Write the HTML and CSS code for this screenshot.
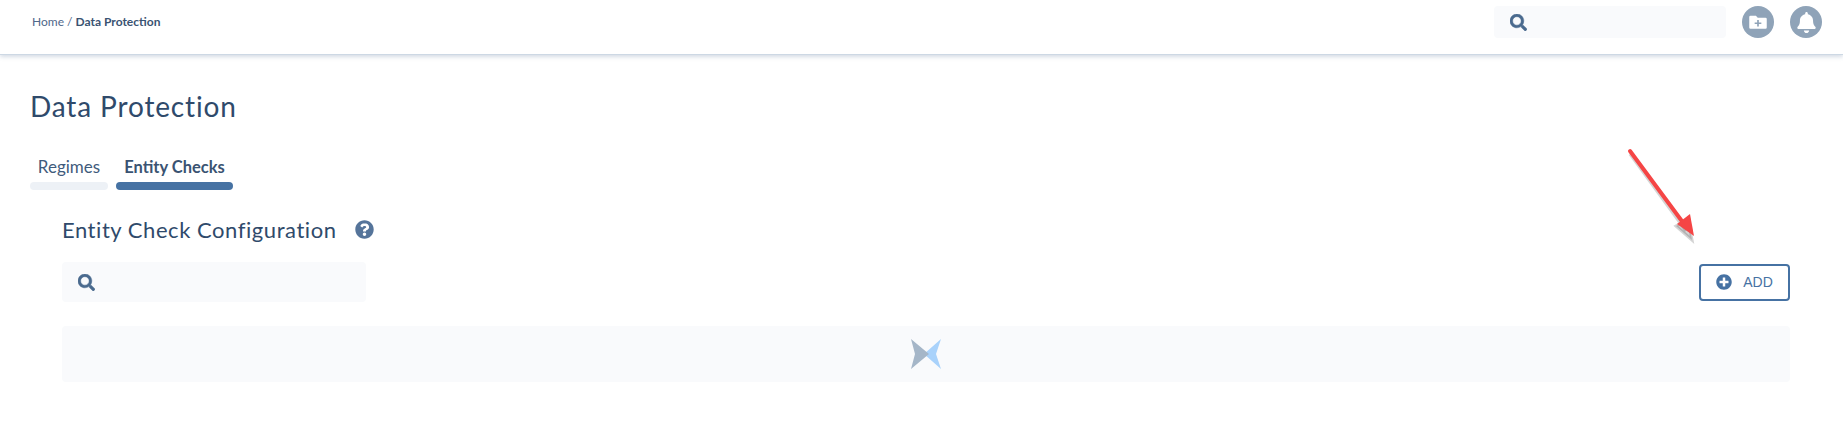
FILE: index.html
```html
<!DOCTYPE html>
<html lang='en'>
	<head>
		<meta charset='utf-8' />
		<title>Data Protection</title>
		<link rel="stylesheet" href="styles.css">
	</head>
	<body>
		<header class="topBar">
			<div class="breadcrumb">Home / <b>Data Protection</b></div>
			<div class="topActions">
				<div class="searchBox topSearch">
					<svg class="searchIcon" viewBox="0 0 512 512"><path d="M505 442.700L405.300 343c-4.500-4.500-10.600-7-17-7H372c27.600-35.300 44-79.700 44-128C416 93.100 322.900 0 208 0S0 93.100 0 208s93.100 208 208 208c48.300 0 92.700-16.400 128-44v16.300c0 6.400 2.500 12.500 7 17l99.700 99.700c9.400 9.400 24.600 9.400 33.900 0l28.300-28.300c9.400-9.400 9.400-24.600.1-34zM208 336c-70.700 0-128-57.200-128-128 0-70.700 57.200-128 128-128 70.700 0 128 57.200 128 128 0 70.700-57.200 128-128 128z"/></svg>
				</div>
				<div class="roundIcon">
					<svg viewBox="0 0 24 24" width="20" height="20"><path fill="#fff" d="M3 4.500h6.500l2.200 2.300H21a1.500 1.500 0 0 1 1.500 1.500v10.200A1.500 1.500 0 0 1 21 20H3a1.500 1.500 0 0 1-1.500-1.500V6A1.500 1.500 0 0 1 3 4.500z"/><path fill="#8fa3b8" d="M11 9.500h2v3h3v2h-3v3h-2v-3H8v-2h3z"/></svg>
				</div>
				<div class="roundIcon">
					<svg viewBox="0 0 448 512" width="19" height="21"><path fill="#fff" d="M224 512c35.300 0 64-28.700 64-64H160c0 35.300 28.700 64 64 64zm215.400-149.700c-19.300-20.800-55.500-52-55.500-154.300 0-77.700-54.500-139.900-127.900-155.200V32c0-17.700-14.300-32-32-32s-32 14.300-32 32v20.800C118.600 68.100 64.100 130.300 64.100 208c0 102.300-36.200 133.500-55.500 154.300-6 6.400-8.700 14.100-8.600 21.700.1 16.400 13 32 32.100 32h383.800c19.100 0 32-15.600 32.100-32 .1-7.600-2.600-15.300-8.600-21.700z"/></svg>
				</div>
			</div>
		</header>
		<main class="page">
			<h1 class="pageTitle">Data Protection</h1>
			<div class="tabs">
				<div class="tab tabRegimes">Regimes</div>
				<div class="tab tabActive">Entity Checks</div>
			</div>
			<section class="config">
				<div class="configHead">
					<h2 class="configTitle">Entity Check Configuration</h2>
					<svg class="helpIcon" viewBox="0 0 512 512"><path d="M504 256c0 137-111 248-248 248S8 393 8 256 119 8 256 8s248 111 248 248zM262.700 90c-54.500 0-89.300 23-116.500 63.800-3.500 5.300-2.400 12.400 2.700 16.300l34.700 26.300c5.200 3.900 12.600 3 16.700-2.100 17.900-22.700 30.100-35.800 57.300-35.800 20.400 0 45.700 13.100 45.700 33 0 15-12.400 22.700-32.600 34-23.600 13.200-54.800 29.700-54.800 70.900V300c0 6.600 5.400 12 12 12h56c6.600 0 12-5.400 12-12v-1.300c0-28.600 83.500-29.800 83.500-107.200 0-58.300-60.500-102.500-117.200-102.500zM256 339.200c-25.500 0-46.200 20.700-46.200 46.200 0 25.500 20.700 46.200 46.200 46.200s46.200-20.700 46.200-46.200c0-25.500-20.700-46.200-46.200-46.200z"/></svg>
				</div>
				<div class="toolRow">
					<div class="searchBox listSearch">
						<svg class="searchIcon" viewBox="0 0 512 512"><path d="M505 442.700L405.300 343c-4.500-4.500-10.600-7-17-7H372c27.600-35.300 44-79.700 44-128C416 93.100 322.900 0 208 0S0 93.100 0 208s93.100 208 208 208c48.300 0 92.700-16.400 128-44v16.300c0 6.400 2.500 12.500 7 17l99.700 99.700c9.400 9.400 24.600 9.400 33.900 0l28.300-28.300c9.400-9.400 9.400-24.600.1-34zM208 336c-70.700 0-128-57.200-128-128 0-70.700 57.200-128 128-128 70.700 0 128 57.200 128 128 0 70.700-57.200 128-128 128z"/></svg>
					</div>
					<button class="addButton">
						<svg viewBox="0 0 512 512" width="16" height="16"><path d="M256 8C119 8 8 119 8 256s111 248 248 248 248-111 248-248S393 8 256 8zm144 276c0 6.600-5.400 12-12 12h-92v92c0 6.600-5.400 12-12 12h-56c-6.600 0-12-5.400-12-12v-92h-92c-6.600 0-12-5.400-12-12v-56c0-6.600 5.400-12 12-12h92v-92c0-6.600 5.400-12 12-12h56c6.600 0 12 5.400 12 12v92h92c6.600 0 12 5.400 12 12z"/></svg>
						ADD
					</button>
				</div>
				<div class="loadingPanel">
					<svg viewBox="0 0 32 30" width="32" height="30"><path fill="#a9d2fb" d="M31 0 L26 15 L31 30 L14 15z"/><path fill="#a5b6c8" d="M1 0 L19 15 L1 30 L5 15z"/></svg>
				</div>
			</section>
		</main>
		<svg class="arrow" viewBox="0 0 80 100" width="80" height="100">
			<path class="arrowShadow" d="M4 7 L60 84 M50 79 L66 93 L62 72z"/>
			<path class="arrowLine" d="M4 4 L61 81"/>
			<path class="arrowHead" d="M51 77 L68 89 L64 67z"/>
		</svg>
	</body>
</html>
```

FILE: styles.css
```css
* {
	box-sizing: border-box;
}
body {
	margin: 0px;
	background: #fff;
	color: #2f4a6b;
	font-family: "Lato", "Open Sans", sans-serif;
}
.topBar {
	height: 55px;
	padding: 6px 21px 0px 32px;
	display: flex;
	justify-content: space-between;
	align-items: flex-start;
	border-bottom: 1px solid #cdd8e4;
	box-shadow: 0px 2px 4px rgba(90, 120, 155, 0.25);
}
.breadcrumb {
	margin-top: 8px;
	font-size: 12px;
	line-height: 15px;
	color: #50688a;
}
.breadcrumb b {
	color: #3a5372;
}
.topActions {
	display: flex;
	gap: 16px;
}
.searchBox {
	display: flex;
	align-items: center;
	background: #f9fafc;
	border-radius: 4px;
	padding-left: 16px;
}
.searchIcon {
	width: 17px;
	height: 17px;
	fill: #4a6a8e;
	stroke: #4a6a8e;
	stroke-width: 14px;
}
.topSearch {
	width: 232px;
	height: 32px;
}
.roundIcon {
	width: 32px;
	height: 32px;
	border-radius: 50%;
	background: #8fa3b8;
	display: flex;
	justify-content: center;
	align-items: center;
}
.page {
	padding: 36px 53px 0px 30px;
}
.pageTitle {
	margin: 0px;
	font-size: 28px;
	line-height: 30px;
	font-weight: 400;
	color: #2f4a6b;
	letter-spacing: 0.85px;
}
.tabs {
	margin-top: 32px;
	display: flex;
	gap: 8px;
}
.tab {
	height: 37px;
	padding-top: 4px;
	font-size: 17px;
	line-height: 20px;
	text-align: center;
	display: flex;
	flex-direction: column;
	justify-content: space-between;
	align-items: center;
}
.tab::after {
	content: "";
	width: 100%;
	height: 8px;
	border-radius: 4px;
	background: #edf1f6;
}
.tabRegimes {
	width: 78px;
	color: #3f5b7c;
}
.tabActive {
	width: 117px;
	font-weight: 700;
	font-size: 16.500px;
	color: #3a5372;
}
.tabActive::after {
	background: #4672a3;
}
.config {
	margin-left: 32px;
}
.configHead {
	margin-top: 24px;
	height: 30px;
	display: flex;
	align-items: center;
	gap: 18px;
}
.configTitle {
	margin: 0px;
	font-size: 22px;
	font-weight: 400;
	letter-spacing: 0.55px;
	color: #2f4a6b;
}
.helpIcon {
	width: 19px;
	height: 19px;
	fill: #55749a;
}
.toolRow {
	margin-top: 18px;
	display: flex;
	justify-content: space-between;
	align-items: center;
}
.listSearch {
	width: 304px;
	height: 40px;
}
.addButton {
	width: 91px;
	height: 37px;
	display: flex;
	justify-content: center;
	align-items: center;
	gap: 11px;
	background: #fff;
	border: 2px solid #4672a3;
	border-radius: 4px;
	font-family: "Liberation Sans", sans-serif;
	font-size: 14px;
	color: #4672a3;
}
.addButton svg {
	fill: #4672a3;
}
.loadingPanel {
	margin-top: 24px;
	height: 56px;
	background: #f9fafc;
	border-radius: 4px;
	display: flex;
	justify-content: center;
	align-items: center;
}
.arrow {
	position: absolute;
	left: 1626px;
	top: 147px;
}
.arrowShadow {
	fill: rgba(60, 60, 60, 0.22);
	stroke: rgba(60, 60, 60, 0.22);
	stroke-width: 3px;
}
.arrowLine {
	stroke: #f54545;
	stroke-width: 4px;
	stroke-linecap: round;
	fill: none;
}
.arrowHead {
	fill: #f54545;
}
```
